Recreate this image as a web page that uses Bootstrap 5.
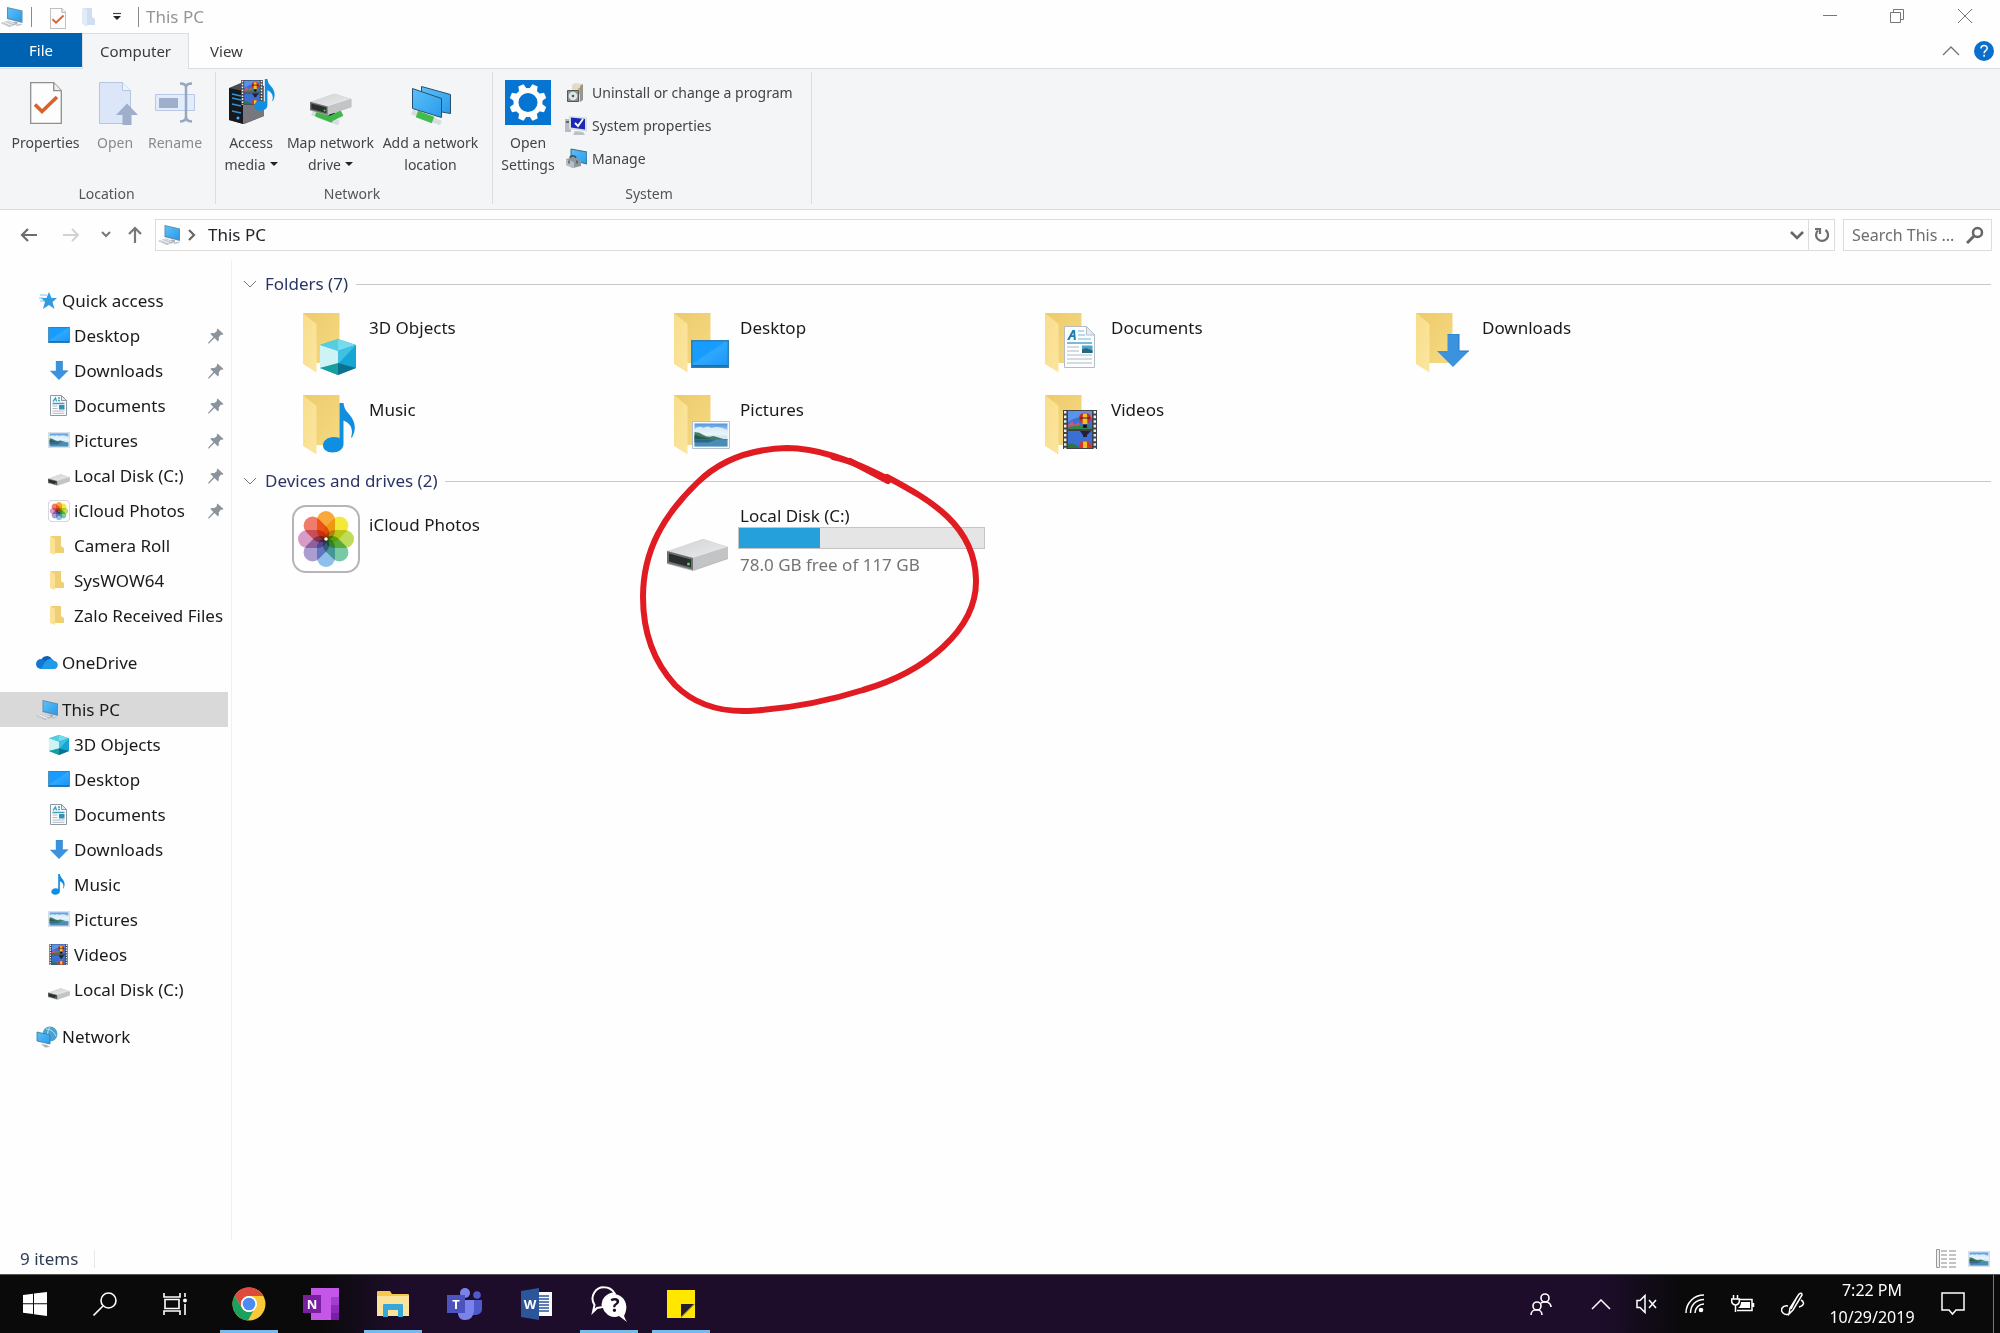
<!DOCTYPE html>
<html lang="en">
<head>
<meta charset="utf-8">
<meta name="viewport" content="width=device-width, initial-scale=1">
<title>This PC</title>
<link href="https://cdn.jsdelivr.net/npm/bootstrap@5.3.0/dist/css/bootstrap.min.css" rel="stylesheet">
<style>
body{font-family:"Noto Sans","Open Sans",sans-serif;font-size:17px;line-height:22px;color:#1a1a1a;background:#fefefe}
svg{display:block;flex:none}
button{border:0;background:none;padding:0;color:inherit}
a{color:inherit;text-decoration:none}
.sprite{position:absolute;width:0;height:0}
.petal{mix-blend-mode:multiply}
.titlebar{height:33px}
.title-rule{width:1px;height:20px;background:#8a8a8a}
.qat-first{margin-left:18px}
.window-title{color:#959595;margin-left:7px}
.win-btn{width:68px;height:33px;color:#777}
.tabs{height:36px;font-size:15px;border-bottom:1px solid #dcdde0}
.tab{height:36px;color:#3b3b3b}
.tab-file{width:82px;height:34px;background:#0063b1;color:#fff}
.tab-active{width:107px;background:#f4f5f7;border:1px solid #dcdde0;border-bottom:0;padding-bottom:2px}
.tab-view{width:75px}
.tab-tools{gap:14px;padding-right:6px}
.ribbon{height:141px;background:#f4f5f7;border-bottom:1px solid #dcdde0;font-size:14px;color:#444}
.rgroup{border-right:1px solid #dcdde0;margin:3px 0 5px;padding-top:5px}
.g-location{width:216px;padding-left:6px;padding-right:8px}
.g-network{width:277px;padding-right:4px}
.g-system{width:319px;padding-left:4px;padding-right:10px}
.rbtn{display:flex;flex-direction:column;align-items:center;line-height:22px;white-space:nowrap}
.rbtn svg{margin-bottom:7px}
.w-lg{width:79px}.w-md{width:60px}.w-acc{width:70px}.w-map{width:89px}.w-add{width:111px}.w-set{width:62px}
.off{color:#8a8a8a}
.group-name{line-height:20px;color:#555}
.caret{display:inline-block;border:4px solid transparent;border-top-color:#222;border-bottom:0;vertical-align:4px;margin-left:4px}
.small-cmds{gap:11px;padding:5px 0 0 6px}
.small-cmds button{display:flex;align-items:center;gap:5px;line-height:22px}
.addressrow{height:50px;color:#777}
.recent{margin-left:21px}
.address{height:32px;border:1px solid #dcdcdc;padding-left:2px}
.refresh{width:26px;height:30px;border-left:1px solid #dcdcdc}
.searchbox{width:149px;height:32px;border:1px solid #dcdcdc;color:#666}
.searchbox input{border:0;outline:0;width:110px;background:none;font-size:16px;padding:0;text-overflow:ellipsis}
.searchbox input::placeholder{color:#6d6d6d}
.work{height:calc(100vh - 353px)}
.navpane{width:232px;border-right:1px solid #f0f0f0;padding-top:23px}
.nrow{display:flex;align-items:center;gap:4px;height:35px;width:228px;padding-left:36px;white-space:nowrap}
.nchild{padding-left:48px}
.nsection{margin-top:12px}
.nsel{background:#d9d9d9}
.pin{margin-left:auto;margin-right:4px;color:#8b949c}
.files{padding:12px 9px 0 11px}
.ghead{height:24px;gap:8px;color:#2a3566}
.ghead hr{margin:0;border-color:#c9c9c9;opacity:1}
.tiles{padding-left:45px}
.tile{display:flex;gap:9px;width:371px;height:82px;color:#1a1a1a;position:relative}
.tile span{padding-top:11px}
.folder-tiles{padding-top:10px;margin-bottom:-1px}
.drive-tiles{padding-top:10px}
.drive-info{width:252px;padding-top:2px}
.drive-info .drive-title,.drive-info .free-space{line-height:22px}
.drive-info .free-space{color:#747474;padding-top:5px}
.drive-bar{height:22px;margin-left:-2px;width:247px;border-radius:0;background:#e5e5e5;border:1px solid #c4c4c4}
.drive-bar .progress-bar{background:#26a0da}
.ink{position:absolute;left:-24px;top:-63px;pointer-events:none}
.statusbar{height:34px;color:#2c3c55;padding:3px 10px 0 20px}
.status-rule{width:1px;height:18px;background:#e8e8e8}
.taskbar{height:59px;background:linear-gradient(90deg,#0a0a0b 0,#0a0a0b 16%,#1d0d2a 20%,#1d0d2b 80%,#0a0a0b 84%,#0a0a0b 100%);border-top:1px solid #555;color:#fff}
.tb{width:70px;height:58px;display:flex;align-items:center;justify-content:center}
.app{width:58px;border-bottom:3px solid transparent;border-top:3px solid transparent}
.running{border-bottom-color:#76b9ed}
.apps{gap:14px;margin-left:10px}
.tray{height:58px;display:flex;align-items:center;justify-content:center}
.t-people{width:76px}.t-more{width:44px}.t-b{width:48px}.t-c{width:52px}.t-vol{width:48px}
.clock{width:106px;font-size:16px;line-height:27px;text-align:center}
.desk{width:7px;border-left:1px solid #777}
</style>
<script src="https://cdn.jsdelivr.net/npm/bootstrap@5.3.0/dist/js/bootstrap.bundle.min.js"></script>
</head>
<body class="d-flex flex-column min-vh-100">
<svg class="sprite" aria-hidden="true">
<defs>
<linearGradient id="gScreen" x1="0" y1="0" x2="1" y2="1"><stop offset="0" stop-color="#5cc0f8"/><stop offset="1" stop-color="#2a9bea"/></linearGradient>
<linearGradient id="gDesk" x1="0" y1="0" x2="1" y2="1"><stop offset=".45" stop-color="#169dff"/><stop offset=".5" stop-color="#2fa8ff"/><stop offset="1" stop-color="#1a97f5"/></linearGradient>
<linearGradient id="gBack" x1="0" y1="0" x2="1" y2="1"><stop offset="0" stop-color="#eccb6c"/><stop offset="1" stop-color="#f6d980"/></linearGradient>
<linearGradient id="gFlap" x1="0" y1="0" x2="1" y2="1"><stop offset="0" stop-color="#f8dd8a"/><stop offset="1" stop-color="#fbe6a0"/></linearGradient>
<linearGradient id="gSky" x1="0" y1="0" x2="0" y2="1"><stop offset="0" stop-color="#4f95e0"/><stop offset=".5" stop-color="#d9edf8"/><stop offset="1" stop-color="#b9dcee"/></linearGradient>
<linearGradient id="gDrive" x1="0" y1="0" x2="1" y2="1"><stop offset="0" stop-color="#d0d1d3"/><stop offset="1" stop-color="#ececee"/></linearGradient>
<symbol id="i-pc" viewBox="0 0 22 22"><path d="M6.500 1 22 4.500v12.500L6.500 13z" fill="#5c8fb3"/><path d="M7.500 2.300 21 5.300v10L7.500 11.800z" fill="url(#gScreen)"/><path d="M13 15.500 17 16v2.500l-4-1z" fill="#a9b1b8"/><path d="M0 17 8 14.500l9 3.500-8 3z" fill="#b3bac1"/><path d="m2 17.300 7-2M4.500 18.200l7-2M7 19.100l7-2M3.500 16.200l8 3.500" stroke="#f2f4f6" stroke-width=".8"/><path d="m15 19 5-1.500 2 1-5 1.800z" fill="#c3c9ce"/></symbol>
<symbol id="i-desktop" viewBox="0 0 38 28"><path d="M0 0h38v28H0z" fill="#2f7fb5"/><path d="M1.500 1.500h35v23.500h-35z" fill="url(#gDesk)"/><path d="M1.500 25h35v1.500h-35z" fill="#1b6ea6"/></symbol>
<symbol id="i-down" viewBox="0 0 32 33"><path d="M10.500 0h11.500v17H32L16 33 0 17h10.500z" fill="#3b93e0"/><path d="M10.500 0h11.500v17H32" fill="none" stroke="#2a78c0"/></symbol>
<symbol id="i-doc" viewBox="0 0 31 42"><path d="M.5.500h22l8 8.500v32.500H.5z" fill="#fcfdfe" stroke="#b5bdc4"/><path d="M22.500.500V9h8z" fill="#e9eef2" stroke="#b5bdc4"/><path d="M3 14 8.500 4H11l.8 10h-2L9.600 11H7l-1.600 3zM8 9.200h1.600L9.300 6.500z" fill="#1c7fae"/><path d="M14 5h6m-6 4h7m-7 4h13" stroke="#9fcde6" stroke-width="1.300"/><path d="M3 17h25" stroke="#3a93c4" stroke-width="1.300"/><path d="M3 21h12M3 25h12M3 29h25M3 33h25M3 37h25" stroke="#c9d0d6" stroke-width="1.300"/><path d="M18 19.500h10.500v7.500H18z" fill="#4aa5d8"/><path d="m18 23.500 4-1.500 6.500 2.500V27H18z" fill="#2c6577"/></symbol>
<symbol id="i-docsm" viewBox="0 0 17 21"><path d="M.5.500h11l5 5v15H.5z" fill="#fcfdfe" stroke="#8d99a1"/><path d="M11.500.500v5h5z" fill="#e3e9ed" stroke="#8d99a1"/><path d="M3 6.500 5.500 3l1 3.500M8 3h2M8 5.500h2M2.500 8.500h12" fill="none" stroke="#3ba0bd" stroke-width="1.300"/><path d="M2.500 11h5M2.500 13.500h5M2.500 16h12M2.500 18.300h12" stroke="#b0bac1"/><path d="M9 10h5.500v4.500H9z" fill="#3a8fb5"/></symbol>
<symbol id="i-pic" viewBox="0 0 38 28"><path d="M.5.500h37v27H.5z" fill="#f7fafb" stroke="#b5c1cb"/><path d="M2.500 2.500h33v23h-33z" fill="url(#gSky)"/><path d="M2.500 8q5-4 9-1 4-3 8 0 7-3 16 2v5h-33z" fill="#eef7fc" opacity=".8"/><path d="M2.500 11q5 0 9 3t10 1l10 3h4v1h-33z" fill="#3f7d66"/><path d="M2.500 14q10 3 20 4.500h-20z" fill="#235a4e"/><path d="M2.500 18.500h33v7h-33z" fill="#4b8db8"/><path d="M2.500 18.500h22l-8 3h-14z" fill="#2f6488"/></symbol>
<symbol id="i-note" viewBox="0 0 32 50"><path d="M16.500 0h4q.5 6 5 10.500c6.500 7 8.500 15 3.500 24h-1c2.500-8 0-14-7.500-17V41c0 5-5 8.500-11 8.500-5.500 0-9.500-3-9.500-7 0-5 5-8.500 10.500-8.500q3.500 0 6 1z" fill="#108ee0"/></symbol>
<symbol id="i-video" viewBox="0 0 34 39"><path d="M0 0h34v39H0z" fill="#3f4348"/><path d="M2.200 1v38M31.800 1v38" stroke="#eee" stroke-width="2.400" stroke-dasharray="2.600 2"/><path d="M5 1h24v18H5zM5 21h24v17H5z" fill="#3b70d2"/><path d="M5 1h24v7q-12-4-24 4z" fill="#5a93ea"/><path d="m5 15 4-4 3 4 3-3 3 4 3 1v2H5z" fill="#c85873"/><path d="M5 17q12-3 24 0v2H5z" fill="#37834e"/><path d="M16 8c0-7 12-7 12 0q0 3-4 6h-4q-4-3-4-6z" fill="#d42b20"/><path d="M20 3.500h4l.5 10.500h-5z" fill="#f3bd2c"/><path d="M17 8h10M20.500 15h3v2.500h-3z" stroke="#2b221c" stroke-width="1.200"/><path d="M17 21h11l-4 4v2h-4v-2z" fill="#251e35"/><path d="M16 36c0-7 12-7 12 0v2H16z" fill="#d73622"/><path d="M20 31.500h4V38h-4z" fill="#f2be2b"/><path d="M5 34q7-2 11 4H5z" fill="#2d7547"/></symbol>
<symbol id="i-cube" viewBox="0 0 36 36"><path d="M18 0 36 6v23l-18 7-18-7V6z" fill="#1ea9cf"/><path d="M0 6 18 0v12z" fill="#55cfe0"/><path d="m18 0 18 6-18 6z" fill="#74dcec"/><path d="m0 6 18 6v13L0 29z" fill="#cdf3f5"/><path d="M18 12 36 6v23l-18-4z" fill="#16a6d6"/><path d="m36 6-18 6 0 13z" fill="#40c1e3"/><path d="M0 29l18-5v12z" fill="#159f9f"/><path d="m18 24 18 5-18 7z" fill="#0a7290"/></symbol>
<symbol id="i-drive" viewBox="0 0 62 32"><path d="m0 13 36-13L61 8v12L26 32 0 25z" fill="#b9babd"/><path d="M0 12 36 0l25 8-35 11z" fill="url(#gDrive)"/><path d="m26 19 35-11v11L26 31z" fill="#c3c4c6"/><path d="m0 12 26 7v12L0 24z" fill="#6d6f71"/><path d="m2 14.500 22 6v8L2 22.500z" fill="#2b2e2f"/><circle cx="21.500" cy="25" r="1.500" fill="#51d35d"/></symbol>
<symbol id="i-photos" viewBox="0 0 68 68"><rect x="1" y="1" width="66" height="66" rx="13" fill="#fff" stroke="#b5b5b9" stroke-width="2"/><rect x="25" y="6" width="18" height="29" rx="9" fill="#f9a93b"/><rect class="petal" x="25" y="6" width="18" height="29" rx="9" fill="#f4e93a" transform="rotate(45 34 34)"/><rect class="petal" x="25" y="6" width="18" height="29" rx="9" fill="#bedb5a" transform="rotate(90 34 34)"/><rect class="petal" x="25" y="6" width="18" height="29" rx="9" fill="#79c9a4" transform="rotate(135 34 34)"/><rect class="petal" x="25" y="6" width="18" height="29" rx="9" fill="#8fc0ea" transform="rotate(180 34 34)"/><rect class="petal" x="25" y="6" width="18" height="29" rx="9" fill="#ab9dd0" transform="rotate(225 34 34)"/><rect class="petal" x="25" y="6" width="18" height="29" rx="9" fill="#d69bc6" transform="rotate(270 34 34)"/><rect class="petal" x="25" y="6" width="18" height="29" rx="9" fill="#f27c6c" transform="rotate(315 34 34)"/><circle cx="34" cy="34" r="1.800" fill="#fff"/></symbol>
<symbol id="i-folder" viewBox="15 7 37 60"><path d="M15 7h36.500v50H28z" fill="url(#gBack)"/><path d="m15 7 13.500 11v48.500L15 58z" fill="url(#gFlap)"/></symbol>
<symbol id="i-foldersm" viewBox="0 0 14 19"><path d="M1 0h10v10l3 2v5H5z" fill="#f0cf74"/><path d="m0 0 5 3v16l-5-2z" fill="#fae197"/></symbol>
<symbol id="i-pin" viewBox="0 0 16 16"><path d="m9.500.500 6 5.500-1.500 1-1-.4-2.300 2.800c.4 1.700.2 3-.7 4L6.500 10 1 15.500l-.8-.1.100-.9L5.400 9 2.200 5.700c1.200-.9 2.500-1 4-.5L9 3l-.3-1z" fill="currentColor"/></symbol>
<symbol id="i-props" viewBox="0 0 32 42"><path d="M.7.700h23l7.600 8v32.600H.7z" fill="#fdfdfe" stroke="#8f8f8f" stroke-width="1.300"/><path d="M23.700.700v8h7.600" fill="#eee" stroke="#8f8f8f" stroke-width="1.300"/><path d="m5 22.500 7 7L27 15" fill="none" stroke="#d9622b" stroke-width="3.600"/></symbol>
</defs>
</svg>

<header>
<div class="titlebar d-flex align-items-center">
  <svg width="23" height="22"><use href="#i-pc"/></svg>
  <div class="title-rule ms-2"></div>
  <button class="qat-first" aria-label="Properties"><svg class="mt-1" width="16" height="21"><use href="#i-props"/></svg></button>
  <button class="ms-3" aria-label="New folder"><svg width="14" height="20" viewBox="0 0 14 20"><path d="M2 1h8v9l3 2v6H2z" fill="#cfdff3"/><path d="m0 0 5 3v17l-5-3z" fill="#e2ecf9"/></svg></button>
  <button class="ms-3" aria-label="Customize Quick Access Toolbar"><svg width="10" height="9" viewBox="0 0 10 9"><path d="M1 1.500h8" stroke="#444" stroke-width="1.200"/><path d="M1 4h8L5 8z" fill="#222"/></svg></button>
  <div class="title-rule ms-3"></div>
  <div class="window-title">This PC</div>
  <div class="ms-auto d-flex">
    <button class="win-btn d-flex align-items-center justify-content-center" aria-label="Minimize"><svg width="16" height="16"><path d="M1 6.500h14" stroke="currentColor"/></svg></button>
    <button class="win-btn d-flex align-items-center justify-content-center" aria-label="Restore"><svg width="16" height="16" fill="none" stroke="currentColor"><path d="M.5 3.500h10v10h-10zM3.500 3v-2.500h10v10H11"/></svg></button>
    <button class="win-btn d-flex align-items-center justify-content-center" aria-label="Close"><svg width="16" height="16" stroke="currentColor"><path d="m0 0 14 14M14 0 0 14"/></svg></button>
  </div>
</div>
<div class="tabs d-flex">
  <button class="tab tab-file">File</button>
  <button class="tab tab-active">Computer</button>
  <button class="tab tab-view">View</button>
  <div class="tab-tools ms-auto d-flex align-items-center">
    <button aria-label="Collapse ribbon"><svg width="18" height="10" fill="none" stroke="#777" stroke-width="1.400"><path d="m1 9 8-8 8 8"/></svg></button>
    <button aria-label="Help"><svg width="20" height="20"><circle cx="10" cy="10" r="10" fill="#0a6fcc"/><path d="M7 7.500c0-4 6.200-3.800 6.200-.3 0 2.400-3.100 2.500-3.100 5M10.100 13.700v2" fill="none" stroke="#fff" stroke-width="1.500"/></svg></button>
  </div>
</div>
<div class="ribbon d-flex">
  <section class="rgroup g-location d-flex flex-column">
    <div class="d-flex">
      <button class="rbtn w-lg"><svg width="48" height="48" viewBox="0 0 48 48"><use href="#i-props" x="8" y="5" width="32" height="42"/></svg>Properties</button>
      <button class="rbtn w-md off" disabled><svg width="48" height="48" viewBox="0 0 48 48"><path d="M8.500 5.500h23l8 8v33h-31z" fill="#dbe7f8" stroke="#b7c6df"/><path d="M31.500 5.500v8h8" fill="#eef4fc" stroke="#b7c6df"/><path d="M36 26.500 47 38h-6.500v11h-9V38H25z" fill="#9eaecb"/></svg>Open</button>
      <button class="rbtn w-md off" disabled><svg width="48" height="48" viewBox="0 0 48 48"><path d="M4.500 17.500h39v16h-39z" fill="#e2ecfa" stroke="#b7c9e6"/><path d="M8 21h19v10H8z" fill="#9eaecb"/><path d="M29 6.500c4 0 6 1 6 4v29c0 3-2 5-6 5M41 6.500c-4 0-6 1-6 4v29c0 3 2 5 6 5" fill="none" stroke="#96a7c2" stroke-width="2.500"/></svg>Rename</button>
    </div>
    <div class="group-name mt-auto text-center">Location</div>
  </section>
  <section class="rgroup g-network d-flex flex-column">
    <div class="d-flex justify-content-start">
      <button class="rbtn w-acc"><svg width="48" height="48" viewBox="0 0 48 48"><path d="m2 11 14-6 21 4v30L17 47 2 43z" fill="#4c4d51"/><path d="m2 11 14 3v33L2 43z" fill="#17181b"/><path d="m16 14 21-4v29l-21 8z" fill="#77777d"/><path d="m5 17 9 2M5 21l9 2M5 27l9 2M5 34l9 2" stroke="#2f93d8" stroke-width="1.600"/><circle cx="11" cy="41" r="1.500" fill="#4eb3f4"/><use href="#i-video" x="14" y="3" width="22" height="25"/><use href="#i-note" x="27" y="2" width="21" height="32"/></svg><div>Access</div><div>media<i class="caret"></i></div></button>
      <button class="rbtn w-map"><svg width="48" height="48" viewBox="0 0 48 48"><path d="m5 36 15 6 14-7M18 41l14 5" stroke="#d7dddc" stroke-width="5"/><path d="m9 36 14 6 12-6M10 37l16 6" stroke="#3fb849" stroke-width="6"/><use href="#i-drive" x="3" y="16" width="42" height="23"/></svg><div>Map network</div><div>drive<i class="caret"></i></div></button>
      <button class="rbtn w-add"><svg width="48" height="48" viewBox="0 0 48 48"><path d="m5 35 29 11M28 38l7-2" stroke="#d7dddc" stroke-width="5"/><path d="m10 37 16 6" stroke="#43bb4d" stroke-width="7"/><path d="m14.500 9.500 29 8v19l-29-5z" fill="url(#gScreen)" stroke="#25516e"/><path d="m5.500 11.500 29 10v19l-29-9z" fill="url(#gScreen)" stroke="#25516e"/></svg><div>Add a network</div><div>location</div></button>
    </div>
    <div class="group-name mt-auto text-center">Network</div>
  </section>
  <section class="rgroup g-system d-flex flex-column">
    <div class="d-flex">
      <button class="rbtn w-set"><svg width="48" height="48" viewBox="0 0 48 48"><path d="M1 3h46v45H1z" fill="#0675d1"/><g transform="translate(24 25.500)"><circle r="12" fill="none" stroke="#fff" stroke-width="5"/><g fill="#fff" transform="rotate(22.500)"><path id="tooth" d="m-4-13.500 1.200-5h5.600l1.200 5z"/><use href="#tooth" transform="rotate(45)"/><use href="#tooth" transform="rotate(90)"/><use href="#tooth" transform="rotate(135)"/><use href="#tooth" transform="rotate(180)"/><use href="#tooth" transform="rotate(225)"/><use href="#tooth" transform="rotate(270)"/><use href="#tooth" transform="rotate(315)"/></g></g></svg><div>Open</div><div>Settings</div></button>
      <div class="small-cmds d-flex flex-column">
        <button><svg width="22" height="22"><path d="m7 3 3-2 8 1v16l-3 2H7z" fill="#dddbd2"/><path d="m15 4 3-2v16l-3 2z" fill="#94968f"/><path d="M9 5h6v13H9z" fill="#edd9b8"/><path d="M13 6h2v6h-2z" fill="#eda23c"/><path d="M2.500 8.500h11v11h-11z" fill="#8d9091" stroke="#55585a"/><circle cx="8" cy="14" r="4.300" fill="#dce7e9"/><circle cx="8" cy="14" r="1.300" fill="#555"/></svg>Uninstall or change a program</button>
        <button><svg width="22" height="22"><path d="M0 4h6v13H0z" fill="#b8bcc4"/><path d="M1 6h4v2H1z" fill="#60656d"/><path d="m4 1 18 1.500v14L4 14z" fill="#d8dde5"/><path d="m6 2.500 14 1.500v10.500L6 12.500z" fill="#1b28b5"/><path d="m10 8 3 3 5-7" fill="none" stroke="#fff" stroke-width="1.800"/><path d="m10 16 8 1 2 3H8z" fill="#bcc1c8"/></svg>System properties</button>
        <button><svg width="22" height="22"><path d="m6 1 16 3v12L6 12z" fill="url(#gScreen)" stroke="#3f6b85"/><path d="m1 11 9-2 6 4v5l-8 2-7-3z" fill="#8d979e"/><path d="m1 11 8 3v6l-8-3z" fill="#b8c0c5"/><path d="M4 12.500v3m8-3v3M5 10c0-3 5-3 6 0" fill="none" stroke="#454b50" stroke-width="1.300"/></svg>Manage</button>
      </div>
    </div>
    <div class="group-name mt-auto text-center">System</div>
  </section>
</div>
<div class="addressrow d-flex align-items-center">
  <button class="ms-3 ps-1" aria-label="Back"><svg width="18" height="16" fill="none" stroke="#6d6d6d" stroke-width="2.200"><path d="M17 8H2M8 2 2 8l6 6"/></svg></button>
  <button class="ms-4" aria-label="Forward" disabled><svg width="18" height="16" fill="none" stroke="#d2d2d2" stroke-width="2"><path d="M1 8h15M10 2l6 6-6 6"/></svg></button>
  <button class="recent" aria-label="Recent locations"><svg width="10" height="8" fill="none" stroke="#777" stroke-width="2"><path d="m1 1 4 4 4-4"/></svg></button>
  <button class="ms-3 me-1" aria-label="Up"><svg width="16" height="18" fill="none" stroke="#777" stroke-width="2.200"><path d="M8 17V2M2 8l6-6 6 6"/></svg></button>
  <div class="address d-flex align-items-center flex-fill ms-2">
    <svg class="me-2" width="22" height="22"><use href="#i-pc"/></svg>
    <svg width="8" height="12" fill="none" stroke="#666" stroke-width="2.200"><path d="m1 1 5 5-5 5"/></svg>
    <a href="#" class="ms-2 ps-1 text-body">This PC</a>
    <button class="ms-auto me-1" aria-label="Previous locations"><svg width="14" height="9" fill="none" stroke="#666" stroke-width="2.600"><path d="m1 1 6 6 6-6"/></svg></button>
    <button class="refresh d-flex align-items-center justify-content-center" aria-label="Refresh"><svg width="16" height="16" fill="none" stroke="#6d6d6d" stroke-width="2.200"><path d="M11.500 3A6 6 0 1 1 4 3.500M1 2h5v5"/></svg></button>
  </div>
  <form class="searchbox d-flex align-items-center mx-2 ps-2 pe-1"><input type="text" aria-label="Search This PC" placeholder="Search This ..."><svg class="ms-1" width="18" height="18" fill="none" stroke="#666"><circle cx="11.500" cy="6.500" r="4.500" stroke-width="2.500"/><path d="m8 10-7 7" stroke-width="3"/></svg></form>
</div>
</header>

<div class="work d-flex flex-fill">
<nav class="navpane flex-shrink-0">
  <a href="#" class="nrow"><svg width="22" height="22"><path d="m13 2 2.500 6H21l-4.500 4 2 7-5.500-4-6 4 2-7-4-4h5.500z" fill="#2f9be2"/><path d="M4 5h7M3 8h5M4 11h5" stroke="#7cc4f0"/></svg>Quick access</a>
  <a href="#" class="nrow nchild"><svg width="22" height="22"><use href="#i-desktop" y="2" width="22" height="16"/></svg>Desktop<svg class="pin" width="16" height="16"><use href="#i-pin"/></svg></a>
  <a href="#" class="nrow nchild"><svg width="22" height="22"><use href="#i-down" x="1" y="1" width="20" height="19"/></svg>Downloads<svg class="pin" width="16" height="16"><use href="#i-pin"/></svg></a>
  <a href="#" class="nrow nchild"><svg width="22" height="22"><use href="#i-docsm" x="2" width="17" height="21"/></svg>Documents<svg class="pin" width="16" height="16"><use href="#i-pin"/></svg></a>
  <a href="#" class="nrow nchild"><svg width="22" height="22"><use href="#i-pic" y="2" width="22" height="16"/></svg>Pictures<svg class="pin" width="16" height="16"><use href="#i-pin"/></svg></a>
  <a href="#" class="nrow nchild"><svg width="22" height="22"><use href="#i-drive" y="9" width="22" height="12"/></svg>Local Disk (C:)<svg class="pin" width="16" height="16"><use href="#i-pin"/></svg></a>
  <a href="#" class="nrow nchild"><svg width="22" height="22"><use href="#i-photos"/></svg>iCloud Photos<svg class="pin" width="16" height="16"><use href="#i-pin"/></svg></a>
  <a href="#" class="nrow nchild"><svg width="22" height="22"><use href="#i-foldersm" x="2" y="1" width="14" height="19"/></svg>Camera Roll</a>
  <a href="#" class="nrow nchild"><svg width="22" height="22"><use href="#i-foldersm" x="2" y="1" width="14" height="19"/></svg>SysWOW64</a>
  <a href="#" class="nrow nchild"><svg width="22" height="22"><use href="#i-foldersm" x="2" y="1" width="14" height="19"/></svg>Zalo Received Files</a>
  <a href="#" class="nrow nsection"><svg width="22" height="22" viewBox="0 0 22 22"><path d="M5 9a6 6 0 0 1 11-2l-8 9H5z" fill="#0f5fb4"/><circle cx="5" cy="12" r="5" fill="#1277cf"/><path d="M9 10c3-4 8-4 9-1 5 0 5 8 0 8H5z" fill="#1f9be8"/></svg>OneDrive</a>
  <a href="#" class="nrow nsection nsel"><svg width="22" height="22"><use href="#i-pc"/></svg>This PC</a>
  <a href="#" class="nrow nchild"><svg width="22" height="22"><use href="#i-cube" y="1" width="22" height="20"/></svg>3D Objects</a>
  <a href="#" class="nrow nchild"><svg width="22" height="22"><use href="#i-desktop" y="2" width="22" height="16"/></svg>Desktop</a>
  <a href="#" class="nrow nchild"><svg width="22" height="22"><use href="#i-docsm" x="2" width="17" height="21"/></svg>Documents</a>
  <a href="#" class="nrow nchild"><svg width="22" height="22"><use href="#i-down" x="1" y="1" width="20" height="19"/></svg>Downloads</a>
  <a href="#" class="nrow nchild"><svg width="22" height="22"><use href="#i-note" x="2" width="16" height="21"/></svg>Music</a>
  <a href="#" class="nrow nchild"><svg width="22" height="22"><use href="#i-pic" y="2" width="22" height="16"/></svg>Pictures</a>
  <a href="#" class="nrow nchild"><svg width="22" height="22"><use href="#i-video" x="1" width="19" height="21"/></svg>Videos</a>
  <a href="#" class="nrow nchild"><svg width="22" height="22"><use href="#i-drive" y="9" width="22" height="12"/></svg>Local Disk (C:)</a>
  <a href="#" class="nrow nsection"><svg width="22" height="22"><circle cx="14" cy="8" r="7.500" fill="#4aa3cf"/><path d="M10 3c5 0 8 3 10 7M14 1c-3 4-3 9 0 14" fill="none" stroke="#b9e4f4"/><path d="m1 6 13 3v9L1 15z" fill="url(#gScreen)" stroke="#3977a4" stroke-width=".8"/><path d="m5 18 6 1 3 2-5 .5z" fill="#a9b5be"/></svg>Network</a>
</nav>

<main class="files flex-fill">
  <div class="ghead d-flex align-items-center"><svg width="14" height="8" fill="none" stroke="#777"><path d="m1 1 6 6 6-6"/></svg><span class="text-nowrap">Folders (7)</span><hr class="flex-fill"></div>
  <div class="tiles folder-tiles d-flex flex-wrap">
    <a href="#" class="tile"><svg width="72" height="72"><use href="#i-folder" x="15" y="7" width="37" height="60"/><use href="#i-cube" x="32" y="33" width="36" height="36"/></svg><span>3D Objects</span></a>
    <a href="#" class="tile"><svg width="72" height="72"><use href="#i-folder" x="15" y="7" width="37" height="60"/><use href="#i-desktop" x="32" y="34" width="38" height="28"/></svg><span>Desktop</span></a>
    <a href="#" class="tile"><svg width="72" height="72"><use href="#i-folder" x="15" y="7" width="37" height="60"/><use href="#i-doc" x="34" y="20" width="31" height="42"/></svg><span>Documents</span></a>
    <a href="#" class="tile"><svg width="72" height="72"><use href="#i-folder" x="15" y="7" width="37" height="60"/><use href="#i-down" x="36" y="28" width="32" height="33"/></svg><span>Downloads</span></a>
    <a href="#" class="tile"><svg width="72" height="72"><use href="#i-folder" x="15" y="7" width="37" height="60"/><use href="#i-note" x="35" y="15" width="32" height="50"/></svg><span>Music</span></a>
    <a href="#" class="tile"><svg width="72" height="72"><use href="#i-folder" x="15" y="7" width="37" height="60"/><use href="#i-pic" x="33" y="33" width="38" height="28"/></svg><span>Pictures</span></a>
    <a href="#" class="tile"><svg width="72" height="72"><use href="#i-folder" x="15" y="7" width="37" height="60"/><use href="#i-video" x="33" y="22" width="34" height="39"/></svg><span>Videos</span></a>
  </div>
  <div class="ghead d-flex align-items-center"><svg width="14" height="8" fill="none" stroke="#777"><path d="m1 1 6 6 6-6"/></svg><span class="text-nowrap">Devices and drives (2)</span><hr class="flex-fill"></div>
  <div class="tiles drive-tiles d-flex flex-wrap">
    <a href="#" class="tile"><svg width="72" height="72"><use href="#i-photos" x="4" y="2" width="68" height="68"/></svg><span>iCloud Photos</span></a>
    <a href="#" class="tile"><svg width="72" height="72"><use href="#i-drive" x="8" y="36" width="62" height="32"/></svg>
      <div class="drive-info"><div class="drive-title">Local Disk (C:)</div><div class="progress drive-bar" role="progressbar" aria-label="Space used" aria-valuenow="33" aria-valuemin="0" aria-valuemax="100"><div class="progress-bar" style="width:33%"></div></div><div class="free-space">78.0 GB free of 117 GB</div></div>
      <svg class="ink" width="350" height="280" viewBox="635 440 350 280" fill="none" stroke="#e11b22" stroke-width="6" stroke-linecap="round" stroke-linejoin="round"><path d="M833 457C852 461 870 470 888 479C840 454 810 448 787 448C750 449 720 460 697 483C664 515 643 550 643 597C643 630 653 661 675 685C695 705 721 712 749 711C783 709 825 702 863 690C925 672 977 630 976 580C975 525 930 500 887 477"/><path d="M850 461 888 481"/></svg>
    </a>
  </div>
</main>
</div>

<footer>
<div class="statusbar d-flex align-items-center"><span>9 items</span><div class="status-rule ms-3"></div>
  <div class="ms-auto d-flex gap-2">
    <button class="me-1" aria-label="Details view"><svg width="20" height="20"><path d="M.5.500h3v18h-3z" fill="#eee" stroke="#999"/><path d="M5 2h6m2 0h7M5 6h6m2 0h7M5 10h6m2 0h7M5 14h6m2 0h7M5 18h6m2 0h7" stroke="#888"/></svg></button>
    <button aria-label="Large icons view"><svg width="22" height="18"><use href="#i-pic" y="1" width="22" height="16"/></svg></button>
  </div>
</div>
<div class="taskbar d-flex">
  <button class="tb" aria-label="Start"><svg width="24" height="24" fill="#fff"><path d="m0 3 10-1.300V11.300H0zM11 1.500 24 0v11.300H11zM0 12.300h10v9.600L0 20.700zM11 12.300h13V24l-13-1.800z"/></svg></button>
  <button class="tb" aria-label="Search"><svg width="24" height="24" fill="none" stroke="#fff" stroke-width="1.600"><circle cx="15.500" cy="8.500" r="7.500"/><path d="M10 14 .500 23.500"/></svg></button>
  <button class="tb" aria-label="Task View"><svg width="24" height="24" fill="none" stroke="#fff" stroke-width="1.600"><path d="M1 1v4h16V1M1 23v-4h16v4M2 7.500h14v9H2zM22 1v4M22 12v11"/><circle cx="22" cy="8.500" r="2" fill="#fff" stroke="none"/></svg></button>
  <div class="apps d-flex">
    <button class="tb app running" aria-label="Chrome"><svg width="34" height="34" viewBox="0 0 34 34"><circle cx="17" cy="17" r="16.500" fill="#fbc838"/><path d="M2.700 8.700a16.500 16.500 0 0 1 28.600.3H17a8 8 0 0 0-7 12z" fill="#dc4b3e"/><path d="M2.700 8.700 10 21a8 8 0 0 0 11.500 2.600L16 33.500A16.500 16.500 0 0 1 2.700 8.700z" fill="#1aa15f"/><circle cx="17" cy="17" r="8" fill="#fff"/><circle cx="17" cy="17" r="6.300" fill="#4b8bf4"/></svg></button>
    <button class="tb app" aria-label="OneNote"><svg width="36" height="32" viewBox="0 0 36 32"><path d="M8 0h28v32H8z" fill="#c557e8"/><path d="M28 9h8v8h-8z" fill="#a33fcf"/><path d="M28 17h8v8h-8z" fill="#8d2cba"/><path d="M28 25h8v7h-8z" fill="#7720a3"/><path d="M0 7h18v18H0z" fill="#7b1fa0"/><text x="9" y="21" text-anchor="middle" font-size="13" font-weight="700" fill="#fff">N</text></svg></button>
    <button class="tb app running" aria-label="File Explorer"><svg width="32" height="26" viewBox="0 0 32 26"><path d="M0 1q0-1 1-1h12l2 3h16q1 0 1 1v21H0z" fill="#f7c64b"/><path d="M0 5h32v20H0z" fill="#fbe39c"/><path d="M6 26V14q0-1 1-1h18q1 0 1 1v12h-5v-7H11v7z" fill="#35a8d8"/></svg></button>
    <button class="tb app" aria-label="Teams"><svg width="36" height="32" viewBox="0 0 36 32"><circle cx="18" cy="5" r="5" fill="#7b83eb"/><circle cx="30" cy="7" r="3.800" fill="#5059c9"/><path d="M24 12h11v9q0 5-6 6h-5z" fill="#5059c9"/><path d="M11 12h16v11q-1 9-9 9-6 0-7-6z" fill="#7b83eb"/><path d="M0 7h18v18H0z" fill="#4b53bc"/><text x="9" y="21" text-anchor="middle" font-size="13" font-weight="700" fill="#fff">T</text></svg></button>
    <button class="tb app" aria-label="Word"><svg width="32" height="32" viewBox="0 0 32 32"><path d="M16 4h15v24H16z" fill="#f7f9fc"/><path d="M18 8h10M18 11h10M18 14h10M18 17h10M18 20h10M18 23h10" stroke="#2b579a" stroke-width="1.500"/><path d="m0 3 18-3v32L0 29z" fill="#2b579a"/><text x="9" y="21" text-anchor="middle" font-size="13" font-weight="700" fill="#fff">W</text></svg></button>
    <button class="tb app running" aria-label="Get Help"><svg width="36" height="36" viewBox="0 0 36 36"><path d="M3.500 19C-2 10 5 1 13 1.200c6 0 9 3.500 10.500 6C16 8 10 14 12 21l-6 1-4 4z" fill="none" stroke="#fff" stroke-width="2"/><path d="M36 36c-2-3-2-4-3-6 5-9 2-20-9-22-11 0-16 13-9 19 3 4 9 5 13 3z" fill="#fff"/><text x="24" y="26" text-anchor="middle" font-size="19" font-weight="700" fill="#1d0d2a">?</text></svg></button>
    <button class="tb app running" aria-label="Sticky Notes"><svg width="28" height="28"><path d="M0 0h28v14L14 28H0z" fill="#ffe700"/><path d="M14 14h13L14 27z" fill="#26202a"/><path d="M28 14v14H14z" fill="#ffe700"/></svg></button>
  </div>
  <div class="ms-auto d-flex">
    <button class="tray t-people" aria-label="People"><svg width="22" height="24" fill="none" stroke="#fff" stroke-width="1.600"><circle cx="15" cy="6" r="4"/><circle cx="7" cy="14" r="4"/><path d="M1 23c0-7 11-7 11 0M11 11c5-3 10 0 10 4"/></svg></button>
    <button class="tray t-more" aria-label="Show hidden icons"><svg width="20" height="11" fill="none" stroke="#fff" stroke-width="1.500"><path d="m1 10 9-9 9 9"/></svg></button>
    <button class="tray t-vol" aria-label="Volume muted"><svg width="22" height="20" fill="none" stroke="#fff" stroke-width="1.500"><path d="M1 6.500h3l5-5v17l-5-5H1zM13 6l7 8M20 6l-7 8"/></svg></button>
    <button class="tray t-b" aria-label="Wi-Fi"><svg width="20" height="20" fill="none" stroke="#fff" stroke-width="1.500"><path d="M1 19C1 9 9 1 19 1M5.500 19C5.500 11 11 5.500 19 5.500M10 19c0-5 4-9 9-9"/><circle cx="16" cy="16" r="2.300" fill="#fff" stroke="none"/></svg></button>
    <button class="tray t-b" aria-label="Battery charging"><svg width="24" height="18" fill="none" stroke="#fff" stroke-width="1.500"><path d="M9 4.500h12v11H6M22.500 8v4M2.500 0v4M6.500 0v4M.700 4h7.600v3q-1 3-3.800 3T.700 7zM4.500 10v7"/><path d="M10 7h9v6H7q3-2 3-6z" fill="#fff" stroke="none"/></svg></button>
    <button class="tray t-c" aria-label="Windows Ink Workspace"><svg width="24" height="24" fill="none" stroke="#fff" stroke-width="1.500"><path d="m8 22 1-6 9-14q3-2 3 1l-9 15zM16 5l-6 12M7 14c-6-1-8 4-5 7s5 1 6 1M20 8c4 2 3 6-2 7"/></svg></button>
    <button class="clock"><span class="d-block">7:22 PM</span><span class="d-block">10/29/2019</span></button>
    <button class="tray t-b ms-1 me-3" aria-label="Notifications"><svg width="24" height="24" fill="none" stroke="#fff" stroke-width="1.500"><path d="M1 1h22v17h-8l-3.500 4L8 18H1z"/></svg></button>
    <button class="desk" aria-label="Show desktop"></button>
  </div>
</div>
</footer>
</body>
</html>
